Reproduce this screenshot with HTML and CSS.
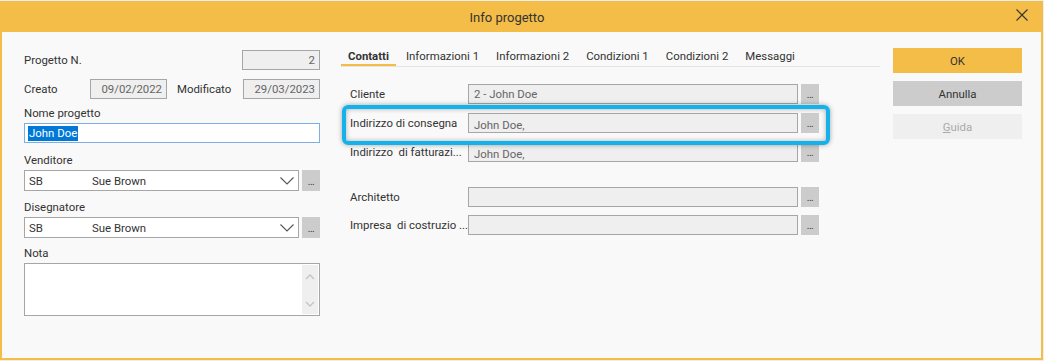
FILE: index.html
```html
<!DOCTYPE html>
<html lang="it">
<head>
<meta charset="utf-8">
<title>Info progetto</title>
<link rel="stylesheet" href="styles.css">
</head>
<body>
<div class="window">
  <div class="titlebar">
    <span class="title">Info progetto</span>
    <span class="close">
      <svg width="12" height="12" viewBox="0 0 12 12"><path d="M0.5 0.5 L11.5 11.5 M11.5 0.5 L0.5 11.5" stroke="#333" stroke-width="1.1" fill="none"/></svg>
    </span>
  </div>
  <div class="content">
    <div class="left">
      <div class="row first">
        <span class="lbl">Progetto N.</span>
        <div class="box num">2</div>
      </div>
      <div class="row second">
        <span class="lbl w66">Creato</span>
        <div class="box date">09/02/2022</div>
        <span class="lbl mod">Modificato</span>
        <div class="box date">29/03/2023</div>
      </div>
      <div class="field f-name">
        <div class="flabel">Nome progetto</div>
        <div class="text-input active"><span class="sel">John Doe</span></div>
      </div>
      <div class="field f-vend">
        <div class="flabel">Venditore</div>
        <div class="combo-row">
          <div class="combo"><span class="code">SB</span><span class="cname">Sue Brown</span>
            <svg class="chev" width="14" height="8" viewBox="0 0 14 8"><path d="M0.5 0.5 L7 7 L13.5 0.5" stroke="#555" stroke-width="1.1" fill="none"/></svg>
          </div>
          <div class="dots">...</div>
        </div>
      </div>
      <div class="field f-dis">
        <div class="flabel">Disegnatore</div>
        <div class="combo-row">
          <div class="combo"><span class="code">SB</span><span class="cname">Sue Brown</span>
            <svg class="chev" width="14" height="8" viewBox="0 0 14 8"><path d="M0.5 0.5 L7 7 L13.5 0.5" stroke="#555" stroke-width="1.1" fill="none"/></svg>
          </div>
          <div class="dots">...</div>
        </div>
      </div>
      <div class="field">
        <div class="flabel">Nota</div>
        <div class="textarea">
          <div class="scroll">
            <svg width="10" height="6" viewBox="0 0 10 6"><path d="M1 5 L5 1 L9 5" stroke="#c4c4c4" stroke-width="1.3" fill="none"/></svg>
            <svg width="10" height="6" viewBox="0 0 10 6"><path d="M1 1 L5 5 L9 1" stroke="#c4c4c4" stroke-width="1.3" fill="none"/></svg>
          </div>
        </div>
      </div>
    </div>

    <div class="middle">
      <div class="tabs">
        <span class="tab active">Contatti</span>
        <span class="tab">Informazioni 1</span>
        <span class="tab">Informazioni 2</span>
        <span class="tab">Condizioni 1</span>
        <span class="tab">Condizioni 2</span>
        <span class="tab">Messaggi</span>
      </div>
      <div class="form">
        <div class="frow"><span class="flbl">Cliente</span><div class="fbox">2 - John Doe</div><div class="dots">...</div></div>
        <div class="frow"><span class="flbl">Indirizzo di consegna</span><div class="fbox low">John Doe,</div><div class="dots">...</div></div>
        <div class="frow"><span class="flbl">Indirizzo&nbsp; di fatturazi...</span><div class="fbox low">John Doe,</div><div class="dots">...</div></div>
        <div class="frow gap"><span class="flbl">Architetto</span><div class="fbox"></div><div class="dots">...</div></div>
        <div class="frow"><span class="flbl">Impresa&nbsp; di costruzio ...</span><div class="fbox"></div><div class="dots">...</div></div>
      </div>
      <div class="highlight"></div>
    </div>

    <div class="buttons">
      <div class="btn ok">OK</div>
      <div class="btn cancel">Annulla</div>
      <div class="btn help"><u>G</u>uida</div>
    </div>
  </div>
</div>
</body>
</html>
```

FILE: styles.css
```css
* { box-sizing: border-box; }
html, body { margin: 0; padding: 0; }
body {
  background: #eeeeee;
  font-family: Roboto, "Liberation Sans", sans-serif;
  font-size: 11.4px;
  color: #333;
}
.window {
  width: 1043px;
  height: 359px;
  background: #f9f9f9;
  border: 2px solid #f4bd48;
  border-top: 0;
  margin-top: 1px;
  display: flex;
  flex-direction: column;
}
.titlebar {
  height: 31px;
  background: #f4bd48;
  position: relative;
  display: flex;
  align-items: center;
  justify-content: center;
  margin: 0 -2px;
  padding-right: 29px;
}
.title { font-size: 13px; color: #333; padding-top: 2px; }
.close { position: absolute; right: 15px; top: 8px; display: flex; }

.content {
  flex: 1;
  display: flex;
  padding: 0 0 0 22px;
}
.left { width: 296px; padding-top: 18px; }
.row { display: flex; align-items: center; height: 20px; margin-bottom: 9px; }
.row.second { margin-bottom: 6px; }
.lbl { flex: 1; }
.lbl.w66 { flex: 0 0 66px; }
.lbl.mod { flex: 0 0 76px; padding-left: 10px; }
.box {
  height: 20px;
  border: 1px solid #a6a6a6;
  background: #efefef;
  color: #666;
  display: flex;
  align-items: center;
  justify-content: flex-end;
  padding-right: 4px;
}
.box.num { width: 78px; }
.box.date { width: 78px; }
.field { margin-bottom: 8px; }
.field.f-name { margin-bottom: 9px; }
.field.f-dis { margin-bottom: 7px; }
.flabel { height: 16px; line-height: 16px; margin-bottom: 2px; }
.text-input {
  height: 20px;
  border: 1px solid #7eaee3;
  background: #fff;
  display: flex;
  align-items: center;
  padding-left: 3px;
}
.sel { background: #0078d7; color: #fff; line-height: 15px; padding: 0 1px; }
.combo-row { display: flex; gap: 3px; }
.combo {
  flex: 1;
  height: 21px;
  border: 1px solid #a6a6a6;
  background: #fff;
  display: flex;
  align-items: center;
  padding-left: 4px;
}
.code { width: 63px; }
.cname { flex: 1; }
.chev { margin-right: 4px; }
.dots {
  width: 18px;
  height: 21px;
  background: #cccccc;
  display: flex;
  align-items: flex-end;
  justify-content: center;
  padding-bottom: 4px;
  font-size: 10px;
  line-height: 10px;
  color: #333;
  letter-spacing: -0.5px;
}
.textarea {
  height: 53px;
  border: 1px solid #a6a6a6;
  background: #fff;
  display: flex;
  justify-content: flex-end;
  padding: 1px;
}
.scroll {
  width: 16px;
  background: #efefef;
  display: flex;
  flex-direction: column;
  align-items: center;
  justify-content: space-between;
  padding: 9px 0 7px;
}

.middle {
  position: relative;
  width: 539px;
  margin-left: 21px;
  padding-top: 16px;
}
.tabs {
  display: flex;
  gap: 3px;
  height: 19px;
  border-bottom: 1px solid #e4e4e4;
}
.tab { padding: 0 7px; line-height: 17px; }
.tab.active { font-weight: bold; border-bottom: 2px solid #f4bd48; }
.form { padding-left: 9px; padding-top: 17px; }
.frow { display: flex; align-items: center; height: 20px; margin-bottom: 9px; }
.frow.gap { margin-top: 25px; margin-bottom: 8px; }
.flbl { width: 118px; white-space: nowrap; overflow: hidden; }
.fbox {
  width: 330px;
  height: 20px;
  border: 1px solid #a6a6a6;
  background: #efefef;
  color: #666;
  display: flex;
  align-items: center;
  padding-left: 5px;
}
.fbox.low { padding-top: 3px; }
.frow .dots { margin-left: 3px; height: 20px; }
.highlight {
  position: absolute;
  left: 1px;
  top: 73px;
  width: 488px;
  height: 40px;
  border: 4px solid #14b2ea;
  border-radius: 6px;
  box-shadow: 0 0 5px rgba(0,0,0,0.35), inset 0 0 5px rgba(0,0,0,0.3);
}

.buttons {
  margin-left: 13px;
  padding-top: 16px;
  width: 129px;
  display: flex;
  flex-direction: column;
  gap: 8px;
}
.btn {
  height: 25px;
  display: flex;
  align-items: center;
  justify-content: center;
}
.btn.ok { background: #f4bd48; }
.btn.cancel { background: #cccccc; }
.btn.help { background: #efefef; color: #aaa; }
.btn.help u { text-decoration-color: #aaa; }
```
